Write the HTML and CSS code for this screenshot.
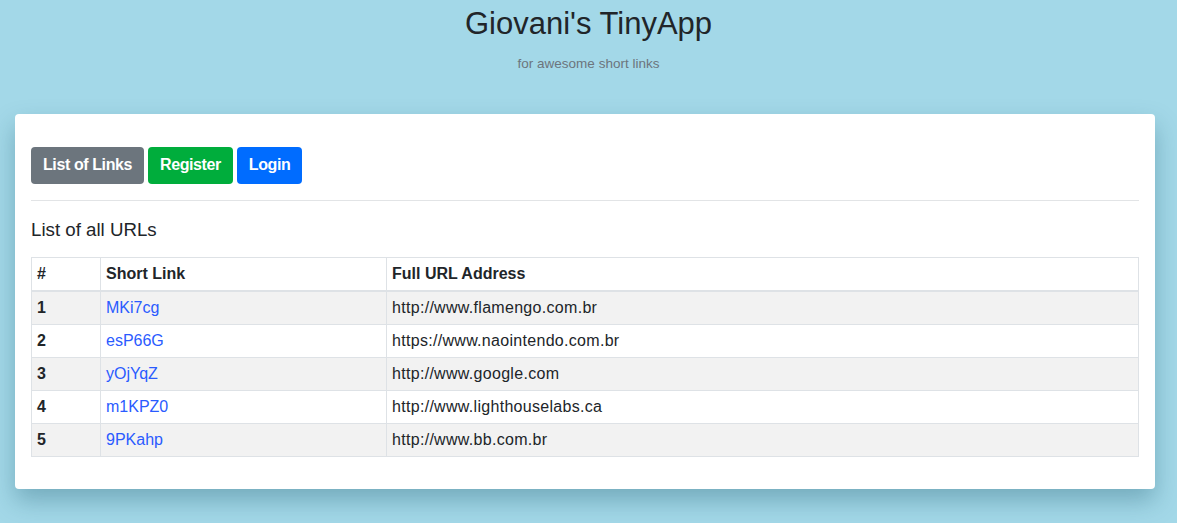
FILE: index.html
```html
<!DOCTYPE html>
<html>
<head>
<meta charset="utf-8">
<link rel="stylesheet" href="styles.css">
</head>
<body>
<header class="hero">
  <h1 class="title">Giovani's TinyApp</h1>
  <p class="subtitle">for awesome short links</p>
</header>
<main class="card">
  <nav class="nav">
    <a class="btn btn-gray">List of Links</a>
    <a class="btn btn-green">Register</a>
    <a class="btn btn-blue">Login</a>
  </nav>
  <hr class="rule">
  <h5 class="heading">List of all URLs</h5>
  <table class="table">
    <thead>
      <tr><th class="c1">#</th><th class="c2">Short Link</th><th>Full URL Address</th></tr>
    </thead>
    <tbody>
      <tr><th>1</th><td><a class="link">MKi7cg</a></td><td class="url">http://www.flamengo.com.br</td></tr>
      <tr><th>2</th><td><a class="link">esP66G</a></td><td class="url">https://www.naointendo.com.br</td></tr>
      <tr><th>3</th><td><a class="link">yOjYqZ</a></td><td class="url">http://www.google.com</td></tr>
      <tr><th>4</th><td><a class="link">m1KPZ0</a></td><td class="url">http://www.lighthouselabs.ca</td></tr>
      <tr><th>5</th><td><a class="link">9PKahp</a></td><td class="url">http://www.bb.com.br</td></tr>
    </tbody>
  </table>
</main>
</body>
</html>
```
FILE: styles.css
```css
* { box-sizing: border-box; }
html, body { margin: 0; padding: 0; }
body {
  background: #a3d8e8;
  font-family: "Liberation Sans", Arial, sans-serif;
  color: #212529;
  font-size: 16px;
  line-height: 1.5;
  height: 523px;
  overflow: hidden;
}
.hero {
  text-align: center;
  padding-top: 2px;
}
.title {
  margin: 0;
  font-size: 31px;
  font-weight: 400;
  line-height: 44px;
}
.subtitle {
  margin: 8px 0 0;
  font-size: 13.5px;
  color: #6c757d;
  line-height: 20px;
}
.card {
  margin: 40px 22px 0 15px;
  background: #fff;
  border-radius: 4px;
  padding: 33px 16px 32px;
  box-shadow: 0 12px 24px rgba(30, 90, 110, 0.35);
}
.nav {
  display: flex;
  gap: 4px;
}
.btn {
  display: inline-block;
  color: #fff;
  font-weight: 700;
  font-size: 16px;
  letter-spacing: -0.4px;
  line-height: 24px;
  padding: 6px 12px 7px;
  border-radius: 4px;
}
.btn-gray { background: #6c757d; }
.btn-green { background: #00ad3c; }
.btn-blue { background: #006cff; }
.rule {
  margin: 16px 0 0;
  border: 0;
  border-top: 1px solid #e2e4e6;
}
.heading {
  margin: 16px 0 0;
  font-size: 18.7px;
  font-weight: 400;
  line-height: 26px;
}
.table {
  margin-top: 14px;
  width: 100%;
  border-collapse: collapse;
  font-size: 16px;
}
.table th, .table td {
  border: 1px solid #dee2e6;
  padding: 4px 5px;
  text-align: left;
  line-height: 24px;
}
.table thead th {
  border-bottom: 2px solid #dee2e6;
  font-weight: 700;
}
.table tbody th { font-weight: 700; }
.table tbody tr:nth-child(odd) { background: #f2f2f2; }
.c1 { width: 69px; }
.c2 { width: 286px; }
.url { letter-spacing: 0.3px; }
.link { color: #2a5bff; }
```
